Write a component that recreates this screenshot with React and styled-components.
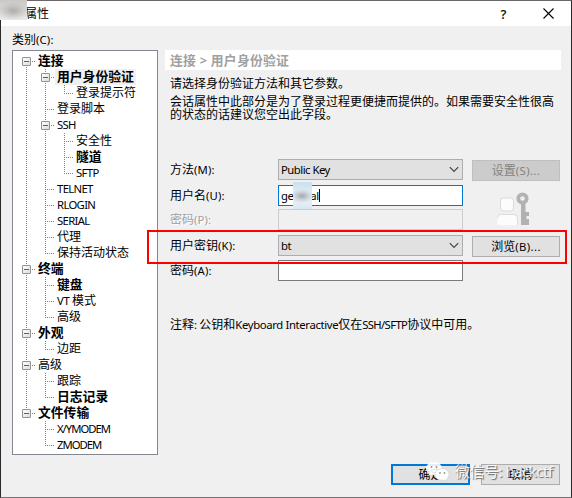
import React from 'react';
import styled, { createGlobalStyle, css } from 'styled-components';

const GlobalStyle = createGlobalStyle`
  * {
    box-sizing: border-box;
  }
  body {
    margin: 0;
    background: #f0f0f0;
    overflow: hidden;
  }
`;

const Dialog = styled.div`
  position: relative;
  width: 572px;
  height: 498px;
  display: flex;
  flex-direction: column;
  background: #f0f0f0;
  border: 1px solid #2b2b2e;
  border-top-color: #6b6769;
  border-bottom-color: #777476;
  color: #000;
  font-family: 'Noto Sans', 'Noto Sans CJK SC', sans-serif;
  font-size: 12px;
  line-height: 16px;
  white-space: nowrap;
`;

const Latin = styled.span`
  font-size: 11.3px;
  letter-spacing: ${({ $spacing }) => $spacing || '-0.35px'};
`;

const TitleBar = styled.header`
  height: 25px;
  flex: none;
  display: flex;
  align-items: center;
  background: #fff;
  padding-left: 24px;
`;

const Title = styled.span`
  flex: 1;
`;

const TitleButton = styled.button`
  width: 45px;
  height: 25px;
  padding: 0;
  border: 0;
  background: none;
  display: flex;
  align-items: center;
  justify-content: center;
  font: 600 13px 'Open Sans', sans-serif;
  color: #111;
`;

const Smudge = styled.div`
  position: absolute;
  left: -1px;
  top: -1px;
  width: 27px;
  height: 20px;
  background:
    radial-gradient(ellipse 16px 9px at 13px 11px, rgba(130, 127, 122, 0.5), rgba(170, 168, 164, 0.3) 60%, transparent),
    linear-gradient(#c9c8c6, #dedddb 60%, #eceae8);
`;

const Body = styled.main`
  flex: 1;
  display: flex;
  padding: 6px 10px 0 11px;
`;

const Sidebar = styled.aside`
  width: 146px;
  flex: none;
`;

const TreeLabel = styled.div`
  height: 18px;
`;

const Tree = styled.ul`
  height: 405px;
  margin: 0;
  padding: 2px 0 0 4px;
  border: 1px solid #828790;
  background: #fff;
  list-style: none;
`;

const TreeRow = styled.li`
  display: flex;
  height: 16px;
`;

const dots = (dir) => `repeating-linear-gradient(${dir}, #808080 0 1px, transparent 1px 2px)`;

const vertical = {
  full: css`background: ${dots('to bottom')} 9px 0 / 1px 16px no-repeat;`,
  tee: css`background: ${dots('to bottom')} 9px 0 / 1px 16px no-repeat, ${dots('to right')} 9px 8px / 9px 1px no-repeat;`,
  end: css`background: ${dots('to bottom')} 9px 0 / 1px 8px no-repeat, ${dots('to right')} 9px 8px / 9px 1px no-repeat;`,
  start: css`background: ${dots('to bottom')} 9px 8px / 1px 8px no-repeat, ${dots('to right')} 9px 8px / 9px 1px no-repeat;`,
  none: '',
};

const Guide = styled.span`
  width: 19px;
  flex: none;
  display: flex;
  align-items: center;
  justify-content: center;
  ${({ $line }) => vertical[$line]}
`;

const Toggle = styled.span`
  width: 9px;
  height: 9px;
  border: 1px solid #919191;
  border-radius: 1px;
  background:
    linear-gradient(#3f5fb0, #3f5fb0) 1px 3px / 5px 1px no-repeat,
    linear-gradient(135deg, #fff, #dcdcdc);
`;

const NodeLabel = styled.span`
  height: 16px;
  padding: 0 2px 0 2px;
  line-height: 15px;
  font-weight: ${({ $bold }) => ($bold ? 700 : 400)};
  font-size: ${({ $bold }) => ($bold ? '12.8px' : '12px')};
  background: ${({ $selected }) => ($selected ? '#f0f0f0' : 'none')};
`;

const Panel = styled.section`
  flex: 1;
  margin-left: 7px;
  padding-top: 18px;
`;

const Crumb = styled.h1`
  height: 20px;
  margin: 0;
  padding-left: 5px;
  background: #fff;
  color: #a0a0a0;
  font-size: 12.8px;
  line-height: 20px;
  letter-spacing: 0.25px;
`;

const Intro = styled.p`
  margin: 6px 0 0 5px;
`;

const Detail = styled.p`
  margin: 3px 0 0 5px;
  line-height: 13px;
`;

const Form = styled.div`
  display: grid;
  grid-template-columns: 108px 185px 97px;
  grid-template-rows: 26px 24px 26px 25px 21px;
  align-items: start;
  margin: 38px 0 0 5px;
`;

const Label = styled.label`
  grid-column: 1;
  line-height: 21px;
  color: ${({ $disabled }) => ($disabled ? '#a0a0a0' : '#000')};
  text-shadow: ${({ $disabled }) => ($disabled ? '1px 1px #fff' : 'none')};
`;

const Field = styled.div`
  position: relative;
  grid-column: 2;
  height: 21px;
  display: flex;
  align-items: center;
  padding-left: 2px;
  background: ${({ $disabled }) => ($disabled ? '#f0f0f0' : '#fff')};
  border: 1px solid ${({ $focus, $disabled }) => ($focus ? '#0078d7' : $disabled ? '#cccccc' : '#7a7a7a')};
`;

const Select = styled(Field)`
  justify-content: space-between;
  padding-right: 3px;
  background: #e1e1e1;
  border-color: #adadad;
`;

const Caret = styled.span`
  width: 1px;
  height: 13px;
  background: #000;
`;

const Mosaic = styled.span`
  position: absolute;
  left: 14px;
  top: -4px;
  width: 19px;
  height: 29px;
  background:
    radial-gradient(ellipse 12px 7px at 9px 14px, rgba(125, 130, 138, 0.65), rgba(160, 168, 176, 0.3) 60%, transparent),
    linear-gradient(#c8e0ee, #e4edf3 40%, #e6eef4 70%, #d2e5f0);
`;

const Button = styled.button`
  width: ${({ $wide }) => ($wide ? '88px' : '79px')};
  height: 21px;
  margin: ${({ $wide }) => ($wide ? '1px 0 0 9px' : '0')};
  padding: 0;
  font: inherit;
  line-height: 17px;
  color: ${({ disabled }) => (disabled ? '#838383' : '#000')};
  background: ${({ disabled }) => (disabled ? '#cccccc' : '#e1e1e1')};
  border: ${({ $primary, disabled }) => ($primary ? '2px solid #0078d7' : `1px solid ${disabled ? '#bfbfbf' : '#adadad'}`)};
`;

const KeyIcon = styled.svg`
  grid-column: 3;
  grid-row: 2 / span 2;
  margin: 7px 0 0 34px;
`;

const Note = styled.p`
  margin: 36px 0 0 5px;
`;

const Footer = styled.footer`
  height: 33px;
  flex: none;
  display: flex;
  justify-content: flex-end;
  gap: 11px;
  padding-right: 11px;
`;

// red frame marking the user key row
const Highlight = styled.div`
  position: absolute;
  left: 146px;
  top: 229px;
  width: 420px;
  height: 34px;
  border: 2px solid #ff0000;
  pointer-events: none;
`;

const Watermark = styled.div`
  position: absolute;
  left: 424px;
  top: 460px;
  display: flex;
  align-items: center;
  gap: 5px;
  color: rgba(255, 255, 255, 0.88);
  font-size: 15px;
  line-height: 20px;
  text-shadow: 1px 1px 1px rgba(60, 60, 60, 0.75);
  pointer-events: none;
`;

const WatermarkText = styled.span`
  margin-top: -2px;
  letter-spacing: -0.5px;
`;

// lines: one guide per level, the last one belongs to the node itself
const nodes = [
  { label: '连接', lines: ['start'], open: true, bold: true },
  { label: '用户身份验证', lines: ['full', 'tee'], open: true, bold: true, selected: true },
  { label: '登录提示符', lines: ['full', 'full', 'end'] },
  { label: '登录脚本', lines: ['full', 'tee'] },
  { label: 'SSH', lines: ['full', 'tee'], open: true },
  { label: '安全性', lines: ['full', 'full', 'tee'] },
  { label: '隧道', lines: ['full', 'full', 'tee'], bold: true },
  { label: 'SFTP', lines: ['full', 'full', 'end'] },
  { label: 'TELNET', lines: ['full', 'tee'] },
  { label: 'RLOGIN', lines: ['full', 'tee'] },
  { label: 'SERIAL', lines: ['full', 'tee'] },
  { label: '代理', lines: ['full', 'tee'] },
  { label: '保持活动状态', lines: ['full', 'end'] },
  { label: '终端', lines: ['tee'], open: true, bold: true },
  { label: '键盘', lines: ['full', 'tee'], bold: true },
  { label: 'VT 模式', lines: ['full', 'tee'] },
  { label: '高级', lines: ['full', 'end'] },
  { label: '外观', lines: ['tee'], open: true, bold: true },
  { label: '边距', lines: ['full', 'end'] },
  { label: '高级', lines: ['tee'], open: true },
  { label: '跟踪', lines: ['full', 'tee'] },
  { label: '日志记录', lines: ['full', 'end'], bold: true },
  { label: '文件传输', lines: ['end'], open: true, bold: true },
  { label: 'X/YMODEM', lines: ['none', 'tee'] },
  { label: 'ZMODEM', lines: ['none', 'end'] },
];

const spacingOf = (run) => {
  if (run.startsWith('(')) return run.includes('...') ? '0.4px' : '0.15px';
  if (run.includes('MODEM')) return '-1px';
  return /^[A-Z/]+$/.test(run) ? '-0.65px' : '-0.35px';
};

// Latin runs get their own size and spacing beside the Chinese text
const Mixed = ({ children }) =>
  children
    .split(/([\x21-\x7e][\x20-\x7e]*)/)
    .map((part, i) => (i % 2 ? <Latin key={i} $spacing={spacingOf(part)}>{part}</Latin> : part));

const Arrow = () => (
  <svg width="10" height="7" viewBox="0 0 10 7" fill="none" stroke="#444" strokeWidth="1.2">
    <path d="M0.8 1.2 L5 5.4 L9.2 1.2" />
  </svg>
);

const App = () => {
  return (
    <Dialog>
      <GlobalStyle />
      <TitleBar>
        <Title>属性</Title>
        <TitleButton>?</TitleButton>
        <TitleButton>
          <svg width="11" height="11" viewBox="0 0 11 11" stroke="#000" strokeWidth="1.1">
            <path d="M0.5 0.5 L10.5 10.5 M10.5 0.5 L0.5 10.5" />
          </svg>
        </TitleButton>
      </TitleBar>
      <Smudge />
      <Body>
        <Sidebar>
          <TreeLabel><Mixed>类别(C):</Mixed></TreeLabel>
          <Tree>
            {nodes.map((node, i) => (
              <TreeRow key={i}>
                {node.lines.map((line, j) => (
                  <Guide key={j} $line={line}>
                    {node.open && j === node.lines.length - 1 && <Toggle />}
                  </Guide>
                ))}
                <NodeLabel $bold={node.bold} $selected={node.selected}>
                  <Mixed>{node.label}</Mixed>
                </NodeLabel>
              </TreeRow>
            ))}
          </Tree>
        </Sidebar>
        <Panel>
          <Crumb>连接 &gt; 用户身份验证</Crumb>
          <Intro>请选择身份验证方法和其它参数。</Intro>
          <Detail>
            会话属性中此部分是为了登录过程更便捷而提供的。如果需要安全性很高
            <br />
            的状态的话建议您空出此字段。
          </Detail>
          <Form>
            <Label><Mixed>方法(M):</Mixed></Label>
            <Select><Latin $spacing="-0.5px">Public Key</Latin><Arrow /></Select>
            <Button $wide disabled><Mixed>设置(S)...</Mixed></Button>

            <Label><Mixed>用户名(U):</Mixed></Label>
            <Field $focus><Latin>general</Latin><Caret /><Mosaic /></Field>
            <KeyIcon width="33" height="34" viewBox="0 0 33 34">
              <rect x="3.5" y="6" width="13" height="13" rx="3" fill="#fcfcfc" stroke="#dadada" />
              <path d="M0.5 33 V26 Q0.5 23 3.500 23 H17 Q20.500 23 20.500 26 V33 Z" fill="#fcfcfc" />
              <path d="M0.5 26 Q0.5 22.500 3.500 22.500 H17 Q20.500 22.500 20.500 26 V33" fill="none" stroke="#dcdcdc" />
              <circle cx="25.5" cy="6.500" r="4.2" fill="none" stroke="#b2b2b2" strokeWidth="3.800" />
              <path d="M24 10 H28.500 V20 H32 V24 H29.500 V27 H32 V33 H24 Z" fill="#b2b2b2" />
            </KeyIcon>

            <Label $disabled><Mixed>密码(P):</Mixed></Label>
            <Field $disabled />

            <Label><Mixed>用户密钥(K):</Mixed></Label>
            <Select><Latin>bt</Latin><Arrow /></Select>
            <Button $wide><Mixed>浏览(B)...</Mixed></Button>

            <Label><Mixed>密码(A):</Mixed></Label>
            <Field />
          </Form>
          <Note><Mixed>注释: 公钥和Keyboard Interactive仅在SSH/SFTP协议中可用。</Mixed></Note>
        </Panel>
      </Body>
      <Footer>
        <Button $primary>确定</Button>
        <Button>取消</Button>
      </Footer>
      <Highlight />
      <Watermark>
        <svg width="25" height="22" viewBox="0 0 25 22">
          <path d="M9 1 C4 1 1 4 1 7.5 C1 10 2.500 11.500 4 12.500 L3.500 15 L6.500 13.500 L9 14 C14 14 17 11 17 7.500 C17 4 14 1 9 1 Z" fill="#fff" fillOpacity="0.88" />
          <path d="M17 7.500 C12.500 7.500 10 10.500 10 13.500 C10 17 13 19.500 17 19.500 L19.500 19 L22 20.500 L21.500 18 C23 17 24 15.500 24 13.500 C24 10 21 7.500 17 7.500 Z" fill="#fff" fillOpacity="0.95" stroke="#ccc" strokeWidth="0.6" />
          <g fill="#999">
            <circle cx="6.500" cy="6" r="1" />
            <circle cx="11.500" cy="6" r="1" />
            <circle cx="15" cy="12" r="0.900" />
            <circle cx="19.500" cy="12" r="0.900" />
          </g>
        </svg>
        <WatermarkText>微信号: hackctf</WatermarkText>
      </Watermark>
    </Dialog>
  );
};

export default App;
